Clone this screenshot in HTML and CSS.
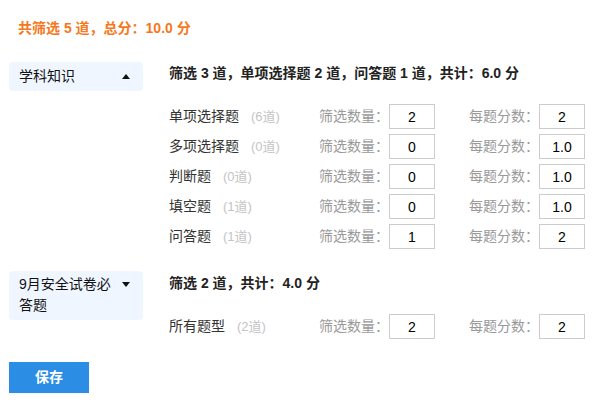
FILE: index.html
```html
<!DOCTYPE html>
<html lang="zh-CN">
<head>
<meta charset="utf-8">
<title>筛选</title>
<link rel="stylesheet" href="styles.css">
</head>
<body>
<div class="page">
  <div class="title">共筛选 5 道，总分：10.0 分</div>

  <div class="section s1">
    <div class="side">
      <span class="side-text">学科知识</span>
      <span class="arrow"><i class="tri up"></i></span>
    </div>
    <div class="main">
      <div class="heading">筛选 3 道，单项选择题 2 道，问答题 1 道，共计：6.0 分</div>
      <div class="rows">
        <div class="row">
          <div class="name">单项选择题<span class="cnt">(6道)</span></div>
          <div class="lbl">筛选数量：</div>
          <input class="box" type="text" value="2">
          <div></div>
          <div class="lbl">每题分数：</div>
          <input class="box" type="text" value="2">
        </div>
        <div class="row">
          <div class="name">多项选择题<span class="cnt">(0道)</span></div>
          <div class="lbl">筛选数量：</div>
          <input class="box" type="text" value="0">
          <div></div>
          <div class="lbl">每题分数：</div>
          <input class="box" type="text" value="1.0">
        </div>
        <div class="row">
          <div class="name">判断题<span class="cnt">(0道)</span></div>
          <div class="lbl">筛选数量：</div>
          <input class="box" type="text" value="0">
          <div></div>
          <div class="lbl">每题分数：</div>
          <input class="box" type="text" value="1.0">
        </div>
        <div class="row">
          <div class="name">填空题<span class="cnt">(1道)</span></div>
          <div class="lbl">筛选数量：</div>
          <input class="box" type="text" value="0">
          <div></div>
          <div class="lbl">每题分数：</div>
          <input class="box" type="text" value="1.0">
        </div>
        <div class="row">
          <div class="name">问答题<span class="cnt">(1道)</span></div>
          <div class="lbl">筛选数量：</div>
          <input class="box" type="text" value="1">
          <div></div>
          <div class="lbl">每题分数：</div>
          <input class="box" type="text" value="2">
        </div>
      </div>
    </div>
  </div>

  <div class="section s2">
    <div class="side">
      <span class="side-text">9月安全试卷必答题</span>
      <span class="arrow"><i class="tri down"></i></span>
    </div>
    <div class="main">
      <div class="heading">筛选 2 道，共计：4.0 分</div>
      <div class="rows">
        <div class="row">
          <div class="name">所有题型<span class="cnt">(2道)</span></div>
          <div class="lbl">筛选数量：</div>
          <input class="box" type="text" value="2">
          <div></div>
          <div class="lbl">每题分数：</div>
          <input class="box" type="text" value="2">
        </div>
      </div>
    </div>
  </div>

  <button class="save" type="button">保存</button>
</div>
</body>
</html>
```

FILE: styles.css
```css
* { box-sizing: border-box; }
html, body { margin: 0; padding: 0; background: #fff; }
body {
  font-family: "Liberation Sans", "Noto Sans CJK SC", sans-serif;
  font-size: 14px;
  line-height: 20px;
  color: #333;
}
.page { padding: 0 9px; }
.title {
  margin-top: 17px;
  padding-left: 9px;
  line-height: 22px;
  font-weight: bold;
  color: #f5781d;
  margin-bottom: 23px;
}
.section { display: flex; gap: 26px; align-items: flex-start; }
.s1 { margin-bottom: 22px; }
.side {
  width: 134px;
  flex: none;
  display: flex;
  align-items: flex-start;
  background: #f0f6ff;
  border-radius: 4px;
  padding: 4px 13px 4px 10px;
  color: #111;
  line-height: 21px;
}
.s2 .side { padding-top: 3px; }
.side-text { flex: 1; min-width: 0; }
.arrow { width: 8px; height: 21px; display: flex; align-items: center; flex: none; }
.tri { display: block; width: 0; height: 0; border-left: 4px solid transparent; border-right: 4px solid transparent; }
.tri.up { border-bottom: 5px solid #111; }
.tri.down { border-top: 5px solid #111; }
.main { flex: 1; }
.heading {
  line-height: 22px;
  font-weight: bold;
  color: #222;
  margin-bottom: 20px;
}
.s2 .heading { padding-top: 1px; }
.rows { display: flex; flex-direction: column; gap: 5px; }
.row {
  display: grid;
  grid-template-columns: 150px 70px 46px 34px 70px 46px;
  align-items: center;
  height: 25px;
}
.name, .lbl { line-height: 20px; height: 20px; margin-top: -2px; }
.name { color: #333; white-space: nowrap; }
.cnt { color: #c4c4c4; font-size: 13px; margin-left: 12px; }
.lbl { color: #999; white-space: nowrap; }
.box {
  width: 46px;
  height: 25px;
  border: 1px solid #cccccc;
  padding: 0;
  margin: 0;
  text-align: center;
  font-family: "Liberation Sans", "Noto Sans CJK SC", sans-serif;
  font-size: 14px;
  color: #000;
  background: #fff;
  outline: none;
}
.save {
  margin-top: 23px;
  width: 80px;
  height: 31px;
  border: none;
  background: #2b8de3;
  color: #fff;
  font-family: "Liberation Sans", "Noto Sans CJK SC", sans-serif;
  font-size: 14px;
  line-height: 20px;
  font-weight: bold;
  padding: 0 0 2px;
  display: block;
}
```
